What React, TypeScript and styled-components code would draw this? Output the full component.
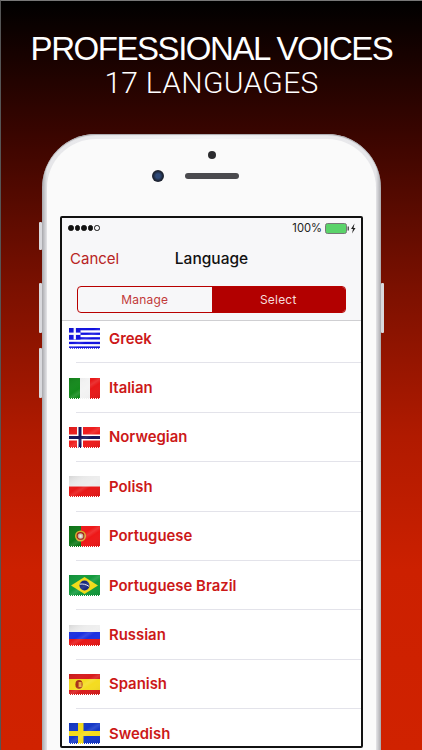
import React from "react";
import styled, { createGlobalStyle } from "styled-components";

const GlobalStyle = createGlobalStyle`
  html, body {
    margin: 0;
    padding: 0;
    background: #000;
  }
  * {
    box-sizing: border-box;
  }
`;

const Poster = styled.div`
  width: 422px;
  height: 750px;
  overflow: hidden;
  display: flex;
  flex-direction: column;
  align-items: center;
  padding-top: 30px;
  background: linear-gradient(180deg, #000 0%, #3a0500 18%, #7a1000 38%, #b01a00 58%, #cc2000 76%, #d02200 100%);
  border-top: 1px solid #777;
  border-left: 1px solid #555;
`;

const Title = styled.h1`
  margin: 0;
  font-family: "Liberation Sans", Arial, sans-serif;
  font-weight: 400;
  font-size: 33px;
  line-height: 35px;
  letter-spacing: -1.45px;
  color: #fff;
  white-space: nowrap;
`;

const Subtitle = styled.h2`
  margin: 0;
  font-family: Roboto, "Liberation Sans", sans-serif;
  font-weight: 300;
  font-size: 30px;
  line-height: 34px;
  letter-spacing: 0.3px;
  color: #fff;
  white-space: nowrap;
`;

const Phone = styled.div`
  position: relative;
  flex: none;
  width: 339px;
  height: 616px;
  margin-top: 34px;
  padding: 5px 5px 0;
  border-radius: 54px 54px 0 0;
  background: linear-gradient(90deg, #a9a9ad 0%, #e6e6e9 1.5%, #f4f4f6 50%, #e6e6e9 98.5%, #a9a9ad 100%);
  box-shadow: inset 0 1px 1px #a9a9ad;
`;

const SideButton = styled.span<{ $side: "left" | "right"; $top: number; $height: number }>`
  position: absolute;
  top: ${(p) => p.$top}px;
  ${(p) => p.$side}: -3px;
  width: 3px;
  height: ${(p) => p.$height}px;
  background: #d9d9dd;
  border-radius: 1px;
`;

const Front = styled.div`
  display: flex;
  flex-direction: column;
  align-items: center;
  height: 100%;
  padding: 12px 0 2px;
  border-radius: 49px 49px 0 0;
  background: #fafafa;
`;

const Sensor = styled.span`
  width: 8px;
  height: 8px;
  border-radius: 50%;
  background: #2b2b2e;
`;

const EarRow = styled.div`
  position: relative;
  display: flex;
  align-items: center;
  justify-content: center;
  margin-top: 11px;
  height: 12px;
`;

const FrontCamera = styled.span`
  position: absolute;
  right: 75px;
  width: 12px;
  height: 12px;
  border-radius: 50%;
  background: radial-gradient(circle at 50% 50%, #2f4a78 0 25%, #1c2230 60%, #3a3a3e 100%);
`;

const Speaker = styled.span`
  width: 54px;
  height: 6px;
  border-radius: 3px;
  background: #4a4a4e;
`;

const Screen = styled.div`
  width: 303px;
  flex: 1;
  min-height: 0;
  margin-top: 34px;
  display: flex;
  flex-direction: column;
  overflow: hidden;
  border: 2px solid #111;
  border-radius: 2px;
  background: #fff;
  font-family: Inter, "Liberation Sans", sans-serif;
`;

const TopBars = styled.div`
  flex: none;
  background: #f7f7f9;
  border-bottom: 1px solid #cfcfd2;
`;

const StatusBar = styled.div`
  display: flex;
  align-items: center;
  justify-content: space-between;
  height: 20px;
  padding: 0 5px 0 6px;
`;

const Signal = styled.div`
  display: flex;
  gap: 1px;
`;

const Dot = styled.span<{ $on: boolean }>`
  width: 5.5px;
  height: 5.5px;
  border-radius: 50%;
  border: 0.7px solid #111;
  background: ${(p) => (p.$on ? "#111" : "transparent")};
`;

const Power = styled.div`
  display: flex;
  align-items: center;
  font-size: 11.2px;
  color: #222;
`;

const BatteryIcon = styled.svg`
  margin-left: 3px;
`;

const NavBar = styled.div`
  position: relative;
  display: flex;
  align-items: center;
  justify-content: center;
  height: 41px;
`;

const Cancel = styled.span`
  position: absolute;
  left: 8px;
  font-size: 15px;
  color: #b82424;
`;

const NavTitle = styled.span`
  font-size: 15.5px;
  font-weight: 500;
  color: #111;
`;

const Segments = styled.div`
  display: flex;
  height: 27px;
  margin: 7px 15px 7px 15px;
  border: 1px solid #b80000;
  border-radius: 4px;
  overflow: hidden;
`;

const Segment = styled.div<{ $active?: boolean }>`
  flex: 1;
  display: flex;
  align-items: center;
  justify-content: center;
  font-size: 12px;
  letter-spacing: 0.2px;
  color: ${(p) => (p.$active ? "#f6dcdc" : "#c23a3a")};
  background: ${(p) => (p.$active ? "#b20000" : "transparent")};
`;

const List = styled.div`
  flex: 1;
  overflow: hidden;
`;

const Rows = styled.div`
  margin-top: -7px;
`;

const Row = styled.div`
  position: relative;
  display: flex;
  align-items: center;
  height: 49.4px;
  padding-left: 7px;
  &::after {
    content: "";
    position: absolute;
    left: 14px;
    right: 0;
    bottom: 0;
    height: 1px;
    background: #e3e3ea;
  }
`;

const RowLabel = styled.span`
  margin-left: 9px;
  font-size: 14.9px;
  font-weight: 600;
  color: #cc1818;
`;

const FlagArt = styled.svg`
  flex: none;
  display: block;
`;

function Flag({ id, children }: { id: string; children: React.ReactNode }) {
  return (
    <FlagArt width="31" height="21" viewBox="0 0 31 21">
      <defs>
        <linearGradient id={id} x1="0" y1="0" x2="1" y2="1">
          <stop offset="0" stopColor="#000" stopOpacity="0.1" />
          <stop offset="0.42" stopColor="#fff" stopOpacity="0" />
          <stop offset="0.52" stopColor="#fff" stopOpacity="0.12" />
          <stop offset="0.62" stopColor="#fff" stopOpacity="0" />
          <stop offset="1" stopColor="#000" stopOpacity="0.08" />
        </linearGradient>
      </defs>
      {children}
      <rect width="31" height="20.5" fill={`url(#${id})`} />
      {/* stamp edge */}
      <line x1="0" y1="20.5" x2="31" y2="20.5" stroke="#fff" strokeWidth="1" strokeDasharray="1 1" />
    </FlagArt>
  );
}

const flags: Record<string, React.ReactNode> = {
  Greek: (
    <>
      <rect width="31" height="21" fill="#fff" />
      {[0, 4.6, 9.2, 13.8, 18.4].map((y) => (
        <rect key={y} y={y} width="31" height="2.3" fill="#1010e0" />
      ))}
      <rect width="11.5" height="11.5" fill="#1010e0" />
      <rect x="4.6" width="2.3" height="11.5" fill="#fff" />
      <rect y="4.6" width="11.5" height="2.3" fill="#fff" />
    </>
  ),
  Italian: (
    <>
      <rect width="11" height="21" fill="#148a1c" />
      <rect x="11" width="10" height="21" fill="#f2f2f2" />
      <rect x="21" width="10" height="21" fill="#e81818" />
    </>
  ),
  Norwegian: (
    <>
      <rect width="31" height="21" fill="#ee1c1c" />
      <rect x="8" width="6" height="21" fill="#fff" />
      <rect y="7.5" width="31" height="6" fill="#fff" />
      <rect x="9.5" width="3" height="21" fill="#14145a" />
      <rect y="9" width="31" height="3" fill="#14145a" />
    </>
  ),
  Polish: (
    <>
      <rect width="31" height="10.5" fill="#ececec" />
      <rect y="10.5" width="31" height="10.5" fill="#e81818" />
    </>
  ),
  Portuguese: (
    <>
      <rect width="12" height="21" fill="#0f7a18" />
      <rect x="12" width="19" height="21" fill="#ee1818" />
      <circle cx="11.5" cy="10" r="5.5" fill="#d8b030" />
      <circle cx="11.5" cy="10" r="3.4" fill="#c8b8a0" stroke="#a01818" strokeWidth="1.2" />
      <rect x="10.4" y="8.6" width="2.2" height="3" fill="#eeeeee" />
    </>
  ),
  "Portuguese Brazil": (
    <>
      <rect width="31" height="21" fill="#129a3c" />
      <polygon points="15.5,2 29,10.5 15.5,19 2,10.5" fill="#f2dc18" />
      <circle cx="15.5" cy="10.5" r="5" fill="#16267c" />
      <path d="M10.8 9.2c3-.6 6.6.2 9.2 2.2" stroke="#fff" strokeWidth="0.9" fill="none" />
    </>
  ),
  Russian: (
    <>
      <rect width="31" height="7" fill="#eeeeee" />
      <rect y="7" width="31" height="7" fill="#1c30e0" />
      <rect y="14" width="31" height="7" fill="#e81818" />
    </>
  ),
  Spanish: (
    <>
      <rect width="31" height="21" fill="#d81c1c" />
      <rect y="5" width="31" height="11" fill="#f4dc20" />
      <ellipse cx="10" cy="10.5" rx="3.6" ry="4.4" fill="#a83018" />
      <rect x="9.6" y="8" width="3" height="5" fill="#e8b040" />
    </>
  ),
  Swedish: (
    <>
      <rect width="31" height="21" fill="#1438c8" />
      <rect x="9" width="5.5" height="21" fill="#f4dc18" />
      <rect y="8" width="31" height="5" fill="#f4dc18" />
    </>
  ),
};

const languages = Object.keys(flags);

export default function App() {
  return (
    <>
      <GlobalStyle />
      <Poster>
        <Title>PROFESSIONAL VOICES</Title>
        <Subtitle>17 LANGUAGES</Subtitle>
        <Phone>
          <SideButton $side="left" $top={88} $height={28} />
          <SideButton $side="left" $top={149} $height={50} />
          <SideButton $side="left" $top={214} $height={50} />
          <SideButton $side="right" $top={149} $height={50} />
          <Front>
            <Sensor />
            <EarRow>
              <FrontCamera />
              <Speaker />
            </EarRow>
            <Screen>
              <TopBars>
                <StatusBar>
                  <Signal>
                    {[true, true, true, true, false].map((on, i) => (
                      <Dot key={i} $on={on} />
                    ))}
                  </Signal>
                  <Power>
                    100%
                    <BatteryIcon width="31" height="11" viewBox="0 0 31 11">
                      <rect x="0.5" y="0.5" width="21" height="10" rx="2" fill="#5ad36a" stroke="#777" />
                      <rect x="22.5" y="3.5" width="1.5" height="4" fill="#555" />
                      <path d="M29.5 0.5 26 6h2l-1 4.5L30.5 5h-2z" fill="#222" />
                    </BatteryIcon>
                  </Power>
                </StatusBar>
                <NavBar>
                  <Cancel>Cancel</Cancel>
                  <NavTitle>Language</NavTitle>
                </NavBar>
                <Segments>
                  <Segment>Manage</Segment>
                  <Segment $active>Select</Segment>
                </Segments>
              </TopBars>
              <List>
                <Rows>
                  {languages.map((name) => (
                    <Row key={name}>
                      <Flag id={`sheen-${name.replace(" ", "")}`}>{flags[name]}</Flag>
                      <RowLabel>{name}</RowLabel>
                    </Row>
                  ))}
                </Rows>
              </List>
            </Screen>
          </Front>
        </Phone>
      </Poster>
    </>
  );
}
